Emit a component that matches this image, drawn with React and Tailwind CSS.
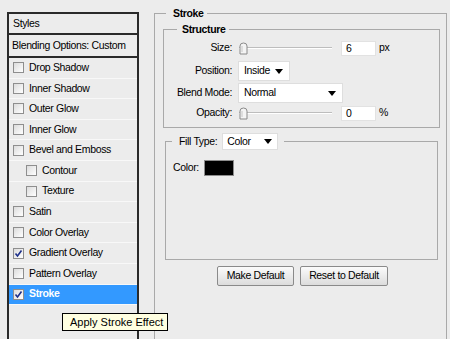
const EFFECTS = [
  { label: 'Drop Shadow' },
  { label: 'Inner Shadow' },
  { label: 'Outer Glow' },
  { label: 'Inner Glow' },
  { label: 'Bevel and Emboss' },
  { label: 'Contour', sub: true },
  { label: 'Texture', sub: true },
  { label: 'Satin' },
  { label: 'Color Overlay' },
  { label: 'Gradient Overlay', checked: true },
  { label: 'Pattern Overlay' },
  { label: 'Stroke', checked: true, active: true },
]

function Checkbox({ checked }) {
  return (
    <span className="w-[11px] h-[11px] shrink-0 border border-[#8e8e8e] bg-gradient-to-br from-[#dcdcdc] to-white flex items-center justify-center">
      {checked && (
        <svg width="9" height="9" viewBox="0 0 9 9">
          <path d="M1.5 4.5 L3.5 7 L7.5 1.5" fill="none" stroke="#1c2f8a" strokeWidth="1.6" />
        </svg>
      )}
    </span>
  )
}

function Slider() {
  return (
    <div className="relative w-[93px] h-[14px] flex items-center">
      <div className="w-full h-[2px] bg-[#bdbdbd] border-b border-white" />
      <svg className="absolute left-0 top-[1px]" width="9" height="13" viewBox="0 0 9 13">
        <path d="M1 4 Q1 1 4.5 1 Q8 1 8 4 L8 12 L1 12 Z" fill="#f4f4f4" stroke="#8a8a8a" />
        <path d="M3 4 L3 10" stroke="#c6c6c6" />
      </svg>
    </div>
  )
}

function Select({ value, width }) {
  return (
    <div className={`${width} h-[20px] bg-white border border-[#dedede] flex items-center justify-between pl-[5px] pr-[6px]`}>
      <span>{value}</span>
      <svg width="8" height="5" viewBox="0 0 8 5">
        <path d="M0 0 L8 0 L4 5 Z" fill="#000" />
      </svg>
    </div>
  )
}

function NumberBox({ value }) {
  return (
    <div className="w-[35px] h-[15px] bg-white border border-[#e2e2e2] pl-[4px] leading-[13px]">{value}</div>
  )
}

export default function App() {
  return (
    <div className="relative w-[450px] h-[339px] overflow-hidden bg-[#ececec] flex text-[10.5px] text-black font-['Liberation_Sans',Arial,sans-serif] tracking-[-0.35px]">
      <aside className="ml-[7px] mt-[12px] w-[132px] h-[340px] shrink-0 border-2 border-b-0 border-[#2a2a2a] flex flex-col">
        <div className="h-[21px] border-b-2 border-[#2a2a2a] flex items-center pl-[4px]">Styles</div>
        <div className="h-[23px] border-b-2 border-[#2a2a2a] flex items-center pl-[3px]">Blending Options: Custom</div>
        {EFFECTS.map((e) => (
          <div
            key={e.label}
            className={`h-[20.6px] flex items-center gap-[5px] border-b border-[#f8f8f8] ${e.sub ? 'pl-[17px]' : 'pl-[4px]'} ${e.active ? 'bg-[#3399ff] text-white font-bold' : ''}`}
          >
            <Checkbox checked={e.checked} />
            <span>{e.label}</span>
          </div>
        ))}
      </aside>

      <div className="ml-[15px] w-[293px] shrink-0">
        <fieldset className="mt-[6px] h-[340px] border border-b-0 border-[#a9a9a9]">
          <legend className="ml-[11px] pl-[7px] pr-[3px] leading-[14px] font-bold">Stroke</legend>

          <fieldset className="mt-[2px] ml-[8px] w-[277px] border border-[#a9a9a9] pb-[7px]">
            <legend className="ml-[13px] pl-[5px] pr-[3px] leading-[14px] font-bold">Structure</legend>

            <div className="mt-[5px] h-[14px] flex items-center">
              <span className="w-[68px] text-right">Size:</span>
              <div className="ml-[7px] flex items-center">
                <Slider />
                <div className="ml-[9px]"><NumberBox value="6" /></div>
                <span className="ml-[3px]">px</span>
              </div>
            </div>

            <div className="mt-[6px] h-[20px] flex items-center">
              <span className="w-[68px] text-right">Position:</span>
              <div className="ml-[6px]"><Select value="Inside" width="w-[52px]" /></div>
            </div>

            <div className="mt-[2px] h-[20px] flex items-center">
              <span className="w-[68px] text-right">Blend Mode:</span>
              <div className="ml-[6px]"><Select value="Normal" width="w-[105px]" /></div>
            </div>

            <div className="mt-[3px] h-[14px] flex items-center">
              <span className="w-[68px] text-right">Opacity:</span>
              <div className="ml-[7px] flex items-center">
                <Slider />
                <div className="ml-[9px]"><NumberBox value="0" /></div>
                <span className="ml-[3px]">%</span>
              </div>
            </div>
          </fieldset>

          <fieldset className="mt-[5px] ml-[10px] w-[273px] h-[127px] border border-[#a9a9a9]">
            <legend className="ml-[6px] pl-[7px] pr-[6px]">
              <div className="flex items-center gap-[5px]">
                <span>Fill Type:</span>
                <div className="w-[56px] h-[17px] bg-white border border-[#dedede] flex items-center justify-between pl-[4px] pr-[5px]">
                  <span>Color</span>
                  <svg width="8" height="5" viewBox="0 0 8 5">
                    <path d="M0 0 L8 0 L4 5 Z" fill="#000" />
                  </svg>
                </div>
              </div>
            </legend>
            <div className="mt-[10px] pl-[7px] h-[16px] flex items-center gap-[5px]">
              <span>Color:</span>
              <div className="w-[30px] h-[16px] bg-black border border-[#8c8c8c]" />
            </div>
          </fieldset>

          <div className="mt-[6px] ml-[62px] flex gap-[6px]">
            <button className="w-[77px] h-[20px] rounded-[2px] border border-[#8a8a8a] bg-gradient-to-b from-[#fbfbfb] to-[#dcdcdc]">
              Make Default
            </button>
            <button className="w-[88px] h-[20px] rounded-[2px] border border-[#8a8a8a] bg-gradient-to-b from-[#fbfbfb] to-[#dcdcdc]">
              Reset to Default
            </button>
          </div>
        </fieldset>
      </div>

      <div className="absolute left-[62px] top-[313px] w-[106px] h-[18px] bg-[#ffffe1] border border-black flex items-center pl-[7px] text-[11px] tracking-normal whitespace-nowrap">
        Apply Stroke Effect
      </div>
    </div>
  )
}
